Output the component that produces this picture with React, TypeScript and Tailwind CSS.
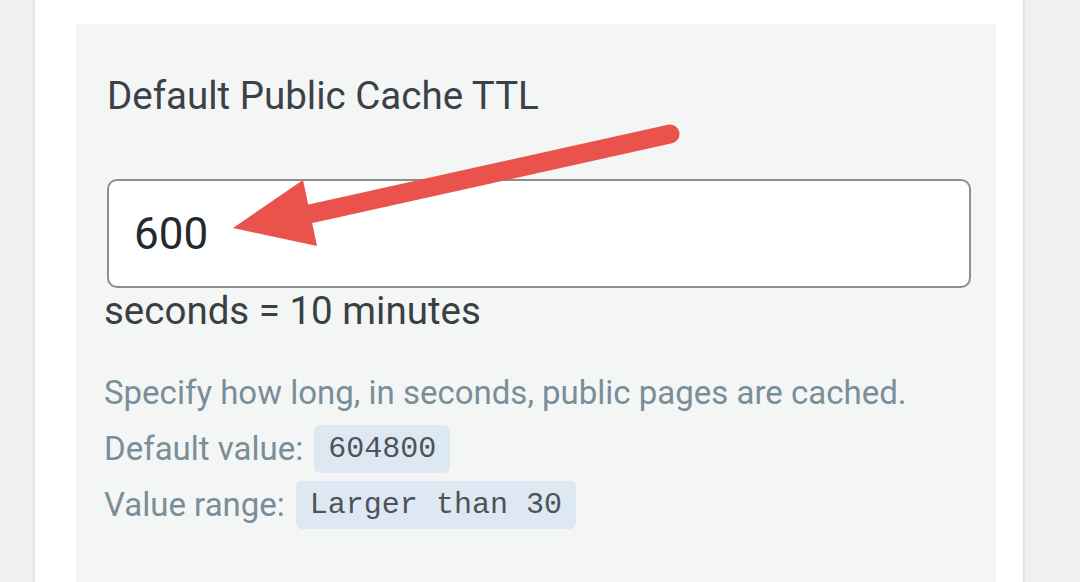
import React from "react";

const Badge = ({ children }: { children: React.ReactNode }) => (
  <span className="ml-[11px] inline-flex h-12 items-center rounded-md bg-[#dee8f3] px-[14px] font-['Liberation_Mono',monospace] text-[30px] text-[#4d535a]">
    {children}
  </span>
);

const App = () => {
  return (
    <div className="relative h-[582px] w-[1080px] overflow-hidden bg-[#f0f0f0] font-['Roboto',sans-serif]">
      <div className="ml-[33px] h-full w-[992px] border-x-2 border-[#e4e4e4] bg-white pl-[41px] pr-[27px] pt-6">
        {/* settings panel */}
        <div className="h-full bg-[#f4f6f6] pl-[28px] pr-[25px] pt-[49px]">
          <h2 className="ml-[3px] text-[38.5px] leading-[46px] text-[#3c4147]">
            Default Public Cache TTL
          </h2>

          <div className="ml-[3px] mt-[60px] flex h-[109px] items-center rounded-[10px] border-2 border-[#8e8e8e] bg-white pl-[25px]">
            <span className="text-[44px] text-[#23292e]">600</span>
          </div>

          <p className="h-[46px] text-[38.5px] leading-[46px] text-[#3a3f44]">
            seconds = 10 minutes
          </p>

          <div className="mt-[34px] flex flex-col gap-2 text-[33px] text-[#7a8e99]">
            <div className="flex h-[49px] items-center">
              Specify how long, in seconds, public pages are cached.
            </div>
            <div className="flex h-12 items-center">
              Default value:
              <Badge>604800</Badge>
            </div>
            <div className="flex h-12 items-center">
              Value range:
              <Badge>Larger than 30</Badge>
            </div>
          </div>
        </div>
      </div>

      {/* annotation arrow */}
      <svg
        className="pointer-events-none absolute left-0 top-0"
        width="1080"
        height="582"
        viewBox="0 0 1080 582"
      >
        <line
          x1="670"
          y1="134"
          x2="305"
          y2="215"
          stroke="#e9534b"
          strokeWidth="19"
          strokeLinecap="round"
        />
        <polygon points="233,228 303,180 317,246" fill="#e9534b" />
      </svg>
    </div>
  );
};

export default App;
